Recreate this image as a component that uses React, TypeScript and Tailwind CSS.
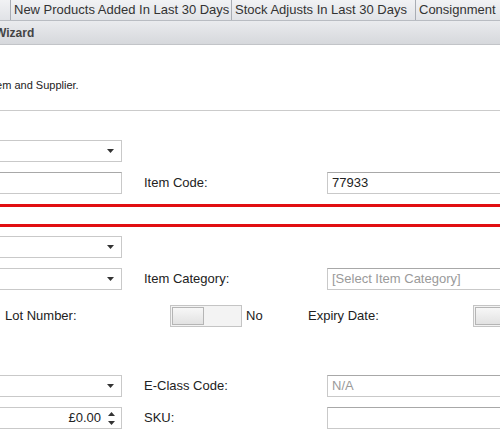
const font = { fontFamily: '"Liberation Sans", Arial, sans-serif' }

function Caret() {
  return (
    <svg width="7" height="4" viewBox="0 0 7 4" className="mr-[7px] shrink-0">
      <path d="M0 0 H7 L3.5 4 Z" fill="#333" />
    </svg>
  )
}

function Dropdown() {
  return (
    <div className="w-[123px] shrink-0 h-[22px] border border-[#c9c9c9] bg-white flex items-center justify-end -ml-px">
      <Caret />
    </div>
  )
}

function TextBox({ value, muted, w = 'w-[123px]' }: { value?: string; muted?: boolean; w?: string }) {
  return (
    <div
      className={`${w} shrink-0 h-[22px] border border-[#c9c9c9] border-t-[#a8a8a8] bg-white flex items-center px-[4px] text-[13px] ${
        muted ? 'text-[#9a9a9a]' : 'text-[#222]'
      }`}
    >
      {value}
    </div>
  )
}

function Toggle() {
  return (
    <div className="w-[72px] shrink-0 h-[22px] border border-[#c4c4c4] bg-[#f3f3f3] p-px flex">
      <div className="w-[32px] h-full border border-[#b5b5b5] bg-gradient-to-b from-[#f7f7f7] to-[#e2e2e2]" />
    </div>
  )
}

function Label({ children }: { children: string }) {
  return <div className="w-[205px] shrink-0 pl-[22px] text-[13px] text-[#222]">{children}</div>
}

export default function App() {
  const tabs = ['', 'New Products Added In Last 30 Days', 'Stock Adjusts In Last 30 Days', 'Consignment']
  const widths = ['w-[11px]', 'w-[221px]', 'w-[184px]', 'w-[100px]']
  return (
    <div style={font} className="w-[500px] h-[432px] overflow-hidden bg-white relative">
      {/* tab strip */}
      <div className="h-[21px] flex bg-gradient-to-b from-[#f1f2f4] to-[#e1e3e7] border-b border-[#b9bcc2]">
        {tabs.map((t, i) => (
          <div
            key={i}
            className={`${widths[i]} shrink-0 h-full border-r border-[#a9adb4] text-[13px] text-[#333] flex items-center pl-[3px] whitespace-nowrap`}
          >
            {t}
          </div>
        ))}
      </div>

      {/* wizard title bar */}
      <div className="h-[24px] bg-gradient-to-b from-[#eaebee] to-[#d6d8dc] border-b border-[#c2c4c8] flex items-center text-[12px] font-bold text-[#444] -ml-[5px]">
        Wizard
      </div>

      <div className="h-[33px]" />
      <div className="text-[11px] text-[#222] -ml-[10px] leading-[14px]">Item and Supplier.</div>
      <div className="h-[18px]" />
      <div className="h-px bg-[#cbcbcb]" />

      <div className="h-[29px]" />
      <Dropdown />
      <div className="h-[10px]" />
      <div className="flex items-center">
        <div className="-ml-px shrink-0"><TextBox /></div>
        <Label>Item Code:</Label>
        <TextBox value="77933" w="w-[200px]" />
      </div>

      <div className="h-[10px]" />
      <div className="h-[3px] bg-[#e10f12]" />
      <div className="h-[17px]" />
      <div className="h-[3px] bg-[#e10f12]" />
      <div className="h-[9px]" />

      <Dropdown />
      <div className="h-[10px]" />
      <div className="flex items-center">
        <Dropdown />
        <Label>Item Category:</Label>
        <TextBox value="[Select Item Category]" muted w="w-[200px]" />
      </div>

      <div className="h-[15px]" />
      <div className="flex items-center">
        <div className="w-[170px] shrink-0 pl-[5px] text-[13px] text-[#222]">Lot Number:</div>
        <Toggle />
        <div className="w-[66px] shrink-0 pl-[4px] text-[13px] text-[#222]">No</div>
        <div className="w-[165px] shrink-0 text-[13px] text-[#222]">Expiry Date:</div>
        <Toggle />
      </div>

      <div className="h-[48px]" />
      <div className="flex items-center">
        <Dropdown />
        <Label>E-Class Code:</Label>
        <TextBox value="N/A" muted w="w-[200px]" />
      </div>
      <div className="h-[10px]" />
      <div className="flex items-center">
        <div className="w-[123px] shrink-0 h-[22px] border border-[#c9c9c9] bg-white flex items-center justify-end -ml-px text-[13px] text-[#222]">
          £0.00
          <svg width="7" height="13" viewBox="0 0 7 13" className="ml-[7px] mr-[6px]">
            <path d="M0 4 H7 L3.5 0 Z" fill="#333" />
            <path d="M0 9 H7 L3.5 13 Z" fill="#333" />
          </svg>
        </div>
        <Label>SKU:</Label>
        <TextBox w="w-[200px]" />
      </div>
    </div>
  )
}
